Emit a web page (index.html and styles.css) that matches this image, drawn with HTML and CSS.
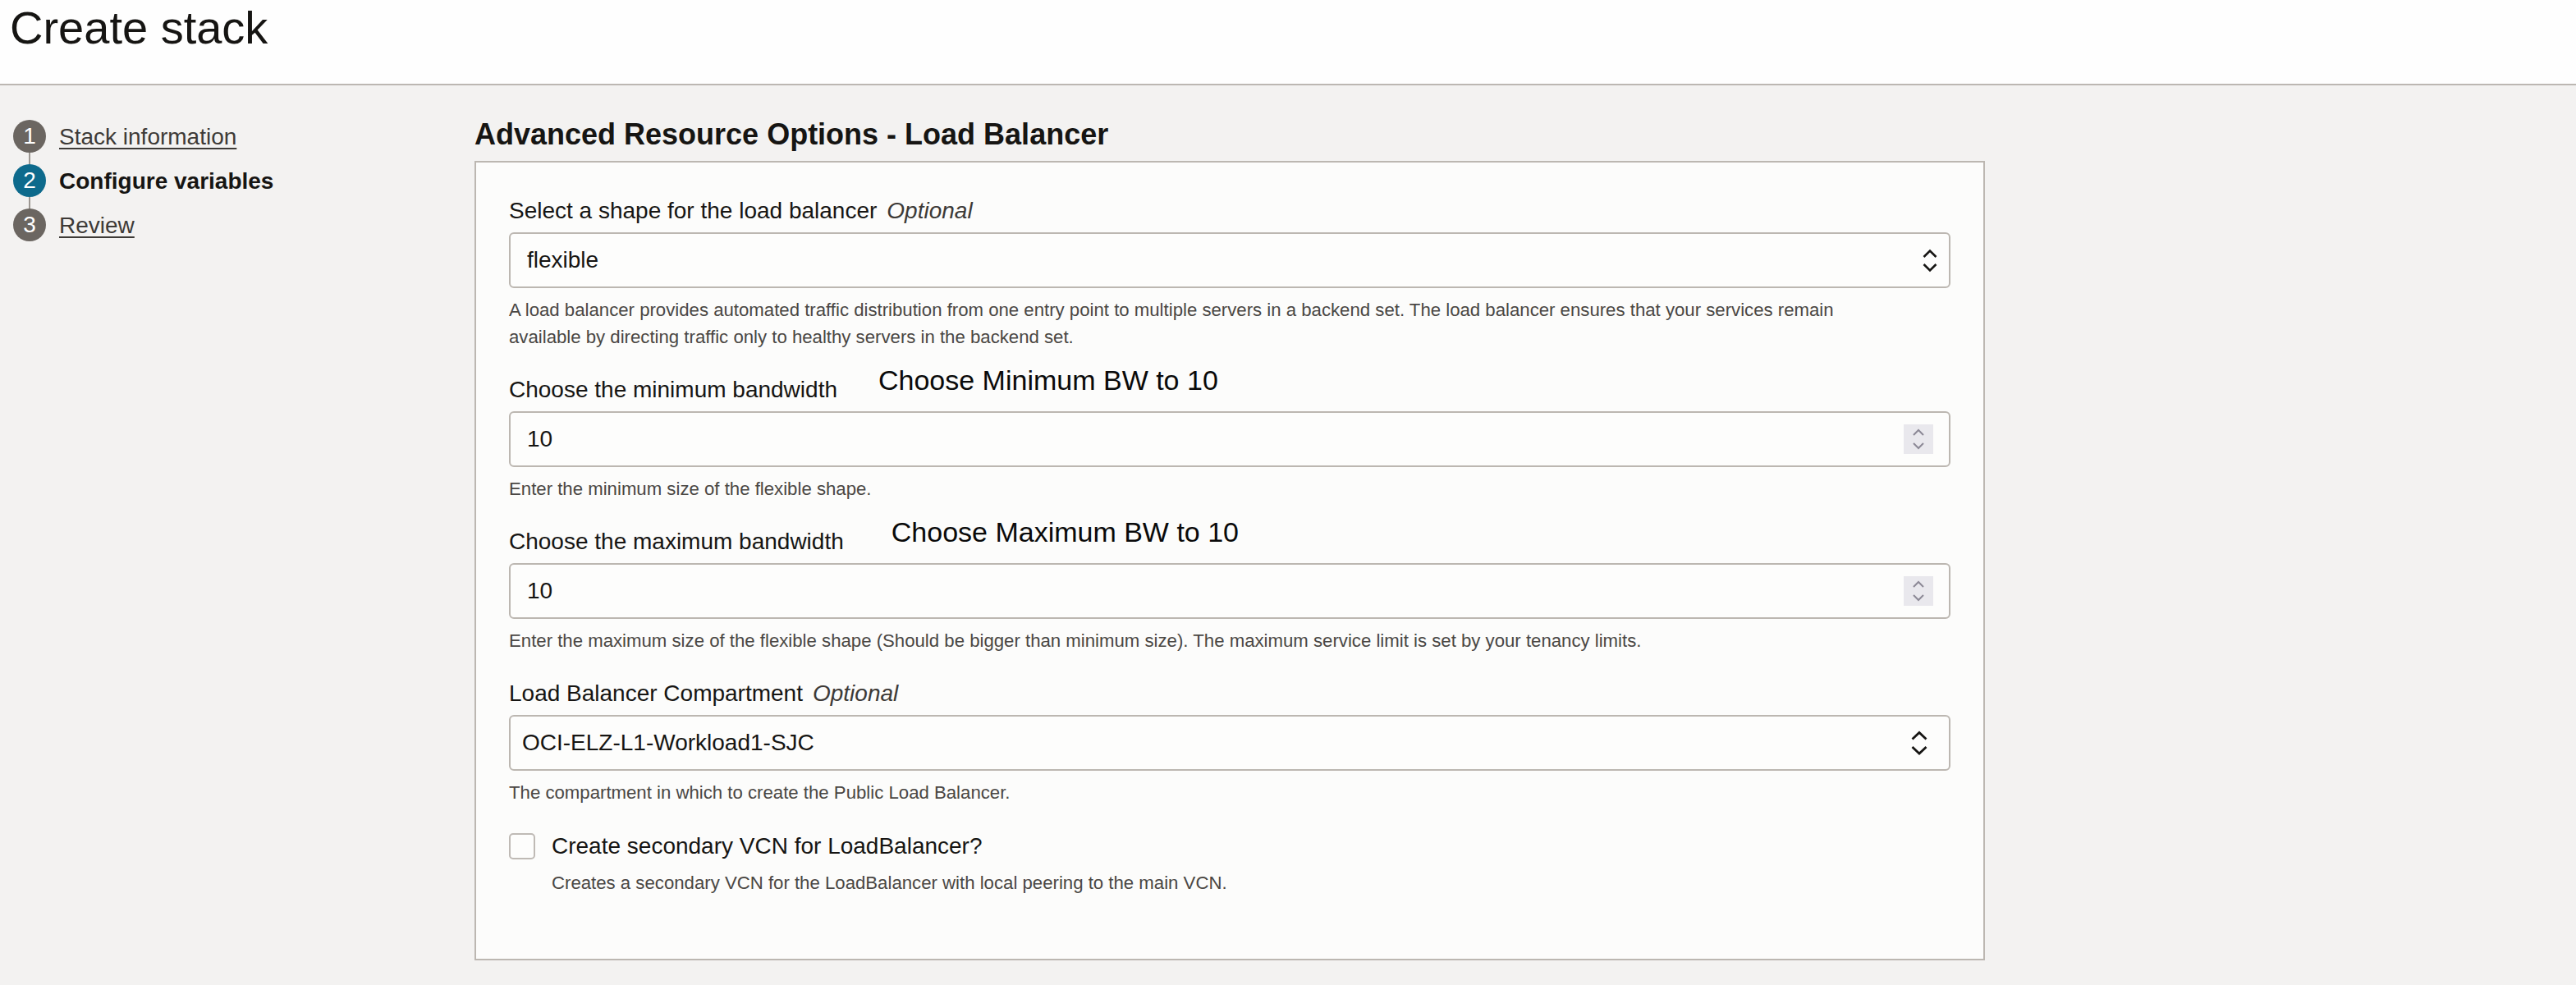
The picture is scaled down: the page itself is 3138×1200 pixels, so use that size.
FILE: index.html
```html
<!DOCTYPE html>
<html lang="en">
<head>
<meta charset="utf-8">
<title>Create stack</title>
<link rel="stylesheet" href="styles.css">
</head>
<body>
<header class="page-header">
  <h1 class="page-title">Create stack</h1>
</header>
<div class="layout">
  <nav class="steps">
    <div class="step">
      <span class="step-num">1</span>
      <a class="step-link" href="#">Stack information</a>
    </div>
    <div class="step-connector"></div>
    <div class="step">
      <span class="step-num step-num-active">2</span>
      <span class="step-current">Configure variables</span>
    </div>
    <div class="step-connector"></div>
    <div class="step">
      <span class="step-num">3</span>
      <a class="step-link" href="#">Review</a>
    </div>
  </nav>
  <main class="main">
    <h2 class="section-title">Advanced Resource Options - Load Balancer</h2>
    <section class="card">
      <div class="field field-first">
        <div class="label-row">
          <span class="label">Select a shape for the load balancer</span>
          <span class="optional">Optional</span>
        </div>
        <div class="input select-native">
          <span class="value">flexible</span>
          <svg class="chev-native" width="18" height="30" viewBox="0 0 18 30"><path d="M1.5 11 L9 3.5 L16.5 11 M1.5 20 L9 27.5 L16.5 20" fill="none" stroke="#161513" stroke-width="2.6"/></svg>
        </div>
        <p class="help">A load balancer provides automated traffic distribution from one entry point to multiple servers in a backend set. The load balancer ensures that your services remain<br>available by directing traffic only to healthy servers in the backend set.</p>
      </div>

      <div class="field">
        <div class="label-row">
          <span class="label">Choose the minimum bandwidth</span>
          <span class="annot annot-min">Choose Minimum BW to 10</span>
        </div>
        <div class="input number">
          <span class="value">10</span>
          <span class="spinner">
            <svg width="14" height="28" viewBox="0 0 14 28"><path d="M1 9 L7 3 L13 9 M1 19 L7 25 L13 19" fill="none" stroke="#8c8996" stroke-width="2"/></svg>
          </span>
        </div>
        <p class="help">Enter the minimum size of the flexible shape.</p>
      </div>

      <div class="field">
        <div class="label-row">
          <span class="label">Choose the maximum bandwidth</span>
          <span class="annot annot-max">Choose Maximum BW to 10</span>
        </div>
        <div class="input number">
          <span class="value">10</span>
          <span class="spinner">
            <svg width="14" height="28" viewBox="0 0 14 28"><path d="M1 9 L7 3 L13 9 M1 19 L7 25 L13 19" fill="none" stroke="#8c8996" stroke-width="2"/></svg>
          </span>
        </div>
        <p class="help">Enter the maximum size of the flexible shape (Should be bigger than minimum size). The maximum service limit is set by your tenancy limits.</p>
      </div>

      <div class="field">
        <div class="label-row">
          <span class="label">Load Balancer Compartment</span>
          <span class="optional">Optional</span>
        </div>
        <div class="input select-custom">
          <span class="value">OCI-ELZ-L1-Workload1-SJC</span>
          <svg class="chev-custom" width="20" height="30" viewBox="0 0 20 30"><path d="M1.5 10.5 L10 2.5 L18.5 10.5 M1.5 20 L10 28 L18.5 20" fill="none" stroke="#161513" stroke-width="2.8"/></svg>
        </div>
        <p class="help">The compartment in which to create the Public Load Balancer.</p>
      </div>

      <div class="check-row">
        <span class="checkbox"></span>
        <span class="label">Create secondary VCN for LoadBalancer?</span>
      </div>
      <p class="help help-check">Creates a secondary VCN for the LoadBalancer with local peering to the main VCN.</p>
    </section>
  </main>
</div>
</body>
</html>
```

FILE: styles.css
```css
* { box-sizing: border-box; }

html, body {
  margin: 0;
  padding: 0;
}

body {
  background: #f3f2f1;
  font-family: "Liberation Sans", Arial, sans-serif;
  color: #161513;
  min-height: 1200px;
}

.page-header {
  background: #fefefe;
  border-bottom: 2px solid #bcb7b2;
  height: 104px;
  padding: 6px 0 0 12px;
}

.page-title {
  margin: 0;
  font-size: 56px;
  line-height: 56px;
  font-weight: 400;
  color: #161513;
}

.layout {
  display: flex;
  align-items: flex-start;
}

.steps {
  width: 578px;
  flex: none;
  padding: 42px 0 0 16px;
  display: flex;
  flex-direction: column;
}

.step {
  display: flex;
  align-items: center;
  height: 40px;
  gap: 16px;
}

.step-num {
  width: 40px;
  height: 40px;
  border-radius: 50%;
  background: #6b6661;
  color: #ffffff;
  font-size: 28px;
  display: flex;
  align-items: center;
  justify-content: center;
  flex: none;
}

.step-num-active {
  background: #0d6a8c;
}

.step-connector {
  width: 2px;
  height: 14px;
  margin-left: 19px;
  background: #9c9792;
}

.step-link {
  font-size: 28px;
  line-height: 40px;
  padding-top: 2px;
  color: #3d3a37;
  text-decoration: underline;
  text-decoration-thickness: 2px;
  text-underline-offset: 4px;
}

.step-current {
  font-size: 28px;
  line-height: 40px;
  padding-top: 2px;
  font-weight: 700;
  color: #161513;
}

.main {
  width: 1840px;
  flex: none;
  padding-top: 40px;
}

.section-title {
  margin: 0 0 12px 0;
  font-size: 36px;
  line-height: 40px;
  font-weight: 700;
  color: #161513;
}

.card {
  background: #fcfcfb;
  border: 2px solid #bcb7b1;
  padding: 42px 40px 76px 40px;
}

.field {
  margin-top: 31px;
}

.field-first {
  margin-top: 0;
}

.label-row {
  display: flex;
  align-items: flex-start;
  height: 34px;
  margin-bottom: 9px;
}

.label {
  font-size: 28px;
  line-height: 34px;
  color: #161513;
  white-space: nowrap;
}

.optional {
  font-size: 28px;
  line-height: 34px;
  font-style: italic;
  color: #3d3a37;
  margin-left: 12px;
}

.annot {
  font-size: 34px;
  line-height: 34px;
  color: #0a0a0a;
  margin-top: -12px;
  white-space: nowrap;
}

.annot-min { margin-left: 50px; }
.annot-max { margin-left: 58px; }

.input {
  height: 68px;
  border: 2px solid #bcb7b1;
  border-radius: 6px;
  background: #fdfdfc;
  display: flex;
  align-items: center;
  padding-left: 20px;
}

.value {
  font-size: 28px;
  line-height: 34px;
  color: #161513;
  flex: 1;
}

.select-custom {
  padding-left: 14px;
}

.chev-native {
  margin-right: 14px;
  flex: none;
}

.chev-custom {
  margin-right: 26px;
  flex: none;
}

.spinner {
  width: 36px;
  height: 36px;
  background: #e9e8ed;
  display: flex;
  align-items: center;
  justify-content: center;
  margin-right: 19px;
  flex: none;
}

.help {
  margin: 10px 0 0 0;
  font-size: 22.2px;
  line-height: 33px;
  color: #4a4744;
}

.check-row {
  display: flex;
  align-items: center;
  height: 34px;
  margin-top: 32px;
  gap: 20px;
}

.checkbox {
  width: 32px;
  height: 32px;
  border: 2px solid #bfbab5;
  border-radius: 5px;
  background: #fdfdfc;
  flex: none;
}

.help-check {
  margin-top: 11px;
  padding-left: 52px;
}
```
